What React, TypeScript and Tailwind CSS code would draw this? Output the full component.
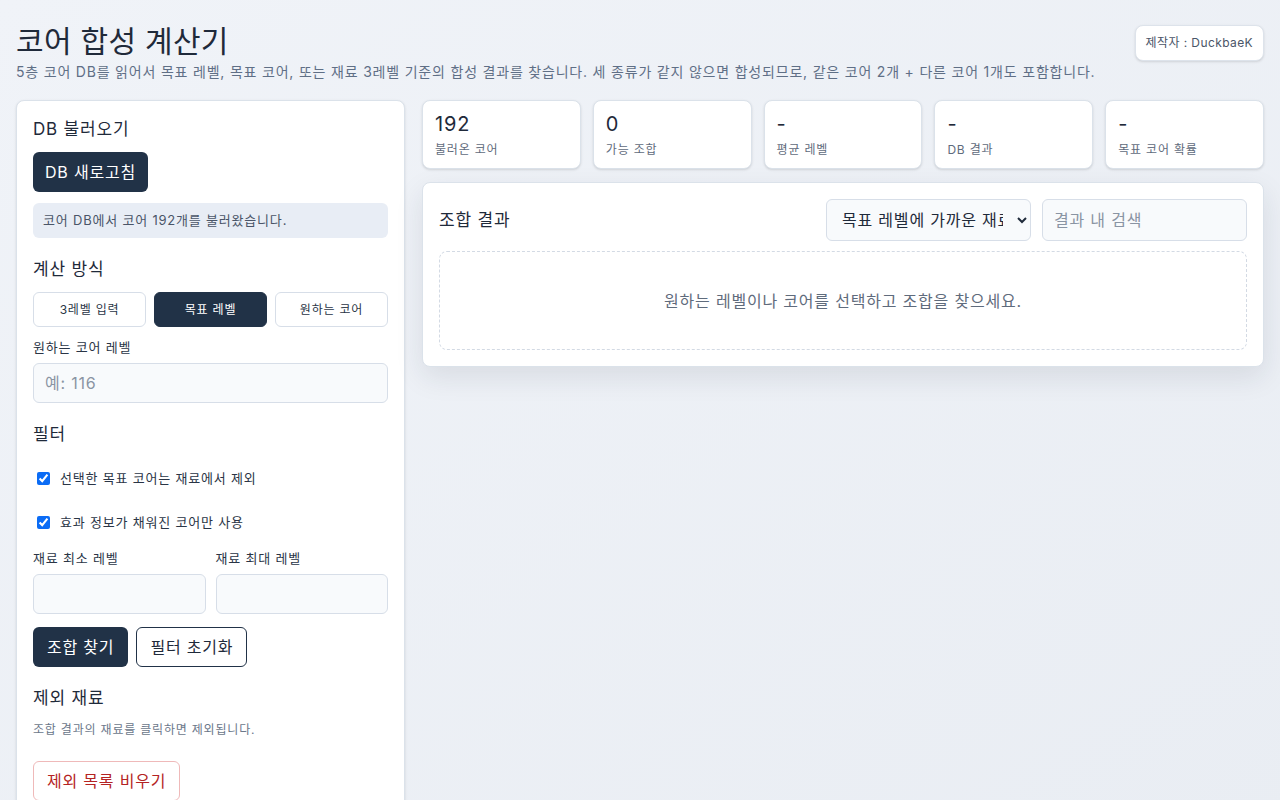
import { useState } from "react"

const stats = [
  { value: "192", label: "불러온 코어" },
  { value: "0", label: "가능 조합" },
  { value: "-", label: "평균 레벨" },
  { value: "-", label: "DB 결과" },
  { value: "-", label: "목표 코어 확률" },
]

const modes = ["3레벨 입력", "목표 레벨", "원하는 코어"]

export default function App() {
  const [mode, setMode] = useState("목표 레벨")
  const [excludeTarget, setExcludeTarget] = useState(true)
  const [onlyFilled, setOnlyFilled] = useState(true)

  return (
    <div
      className="min-h-screen bg-gradient-to-br from-[#f0f3f8] to-[#e9edf3] px-4 pt-[22px] pb-8 tracking-[0.8px] text-[#1f2a3a]"
      style={{ fontFamily: 'Inter, "Noto Sans CJK KR", sans-serif' }}
    >
      {/* header */}
      <header className="flex items-start justify-between">
        <div>
          <h1 className="text-[30px] font-normal leading-[38px] tracking-[0.3px]">코어 합성 계산기</h1>
          <p className="mt-[2px] text-[14px] leading-[19px] text-[#5f6f86]">
            5층 코어 DB를 읽어서 목표 레벨, 목표 코어, 또는 재료 3레벨 기준의 합성 결과를 찾습니다. 세 종류가 같지 않으면
            합성되므로, 같은 코어 2개 + 다른 코어 1개도 포함합니다.
          </p>
        </div>
        <div className="mt-[3px] rounded-lg border border-[#dde3eb] bg-white px-[10px] py-[9px] text-[12px] leading-[16px] tracking-[0.4px] text-[#4a5568] shadow-sm">
          제작자 : DuckbaeK
        </div>
      </header>

      <div className="mt-[19px] grid grid-cols-[389px_1fr] items-start gap-[17px]">
        {/* left panel */}
        <aside className="rounded-lg border border-[#dbe2ea] bg-white px-4 pt-[16px] pb-6 shadow-sm">
          <h2 className="text-[17px] leading-6">DB 불러오기</h2>
          <button className="mt-[11px] h-10 rounded-md bg-[#213247] px-[12px] text-[16px] text-white">DB 새로고침</button>
          <div className="mt-[11px] rounded-md bg-[#e8edf5] px-[10px] py-[8px] text-[13px] leading-[19px] text-[#4a5568]">
            코어 DB에서 코어 192개를 불러왔습니다.
          </div>

          <h2 className="mt-[19px] text-[17px] leading-6">계산 방식</h2>
          <div className="mt-[11px] grid grid-cols-3 gap-2">
            {modes.map((m) => (
              <button
                key={m}
                onClick={() => setMode(m)}
                className={
                  m === mode
                    ? "h-[35px] rounded-md border border-[#213247] bg-[#213247] text-[12px] text-white"
                    : "h-[35px] rounded-md border border-[#d7dee8] bg-white text-[12px] text-[#2a3546]"
                }
              >
                {m}
              </button>
            ))}
          </div>

          <label className="mt-[11px] block text-[13px] leading-[18px] text-[#2a3546]">원하는 코어 레벨</label>
          <input
            placeholder="예: 116"
            className="mt-[7px] h-10 w-full rounded-md border border-[#d7dee8] bg-[#f8fafc] px-[11px] text-[16px] outline-none placeholder:text-[#8a94a3]"
          />

          <h2 className="mt-[19px] text-[17px] leading-6">필터</h2>
          <label className="mt-[23px] flex items-center gap-[10px] pl-[4px] text-[13px] leading-[18px] text-[#2a3546]">
            <input
              type="checkbox"
              checked={excludeTarget}
              onChange={(e) => setExcludeTarget(e.target.checked)}
              className="h-[13px] w-[13px] accent-[#0b6cf5]"
            />
            선택한 목표 코어는 재료에서 제외
          </label>
          <label className="mt-[26px] flex items-center gap-[10px] pl-[4px] text-[13px] leading-[18px] text-[#2a3546]">
            <input
              type="checkbox"
              checked={onlyFilled}
              onChange={(e) => setOnlyFilled(e.target.checked)}
              className="h-[13px] w-[13px] accent-[#0b6cf5]"
            />
            효과 정보가 채워진 코어만 사용
          </label>

          <div className="mt-[18px] grid grid-cols-2 gap-[10px]">
            <div>
              <label className="block text-[13px] leading-[18px] text-[#2a3546]">재료 최소 레벨</label>
              <input className="mt-[7px] h-10 w-full rounded-md border border-[#d7dee8] bg-[#f8fafc] px-[11px] text-[16px] outline-none" />
            </div>
            <div>
              <label className="block text-[13px] leading-[18px] text-[#2a3546]">재료 최대 레벨</label>
              <input className="mt-[7px] h-10 w-full rounded-md border border-[#d7dee8] bg-[#f8fafc] px-[11px] text-[16px] outline-none" />
            </div>
          </div>

          <div className="mt-[13px] flex gap-2">
            <button className="h-10 rounded-md bg-[#213247] px-[14px] text-[16px] text-white">조합 찾기</button>
            <button className="h-10 rounded-md border border-[#213247] bg-white px-[13px] text-[16px] text-[#1f2a3a]">
              필터 초기화
            </button>
          </div>

          <h2 className="mt-[19px] text-[17px] leading-6">제외 재료</h2>
          <p className="mt-[12px] text-[12px] leading-[16px] text-[#6b778a]">조합 결과의 재료를 클릭하면 제외됩니다.</p>
          <button className="mt-[23px] h-10 rounded-md border border-[#efb9b9] bg-white px-[13px] text-[16px] text-[#b42323]">
            제외 목록 비우기
          </button>
        </aside>

        {/* right column */}
        <main className="flex flex-col gap-[13px]">
          <div className="grid grid-cols-5 gap-[12px]">
            {stats.map((s) => (
              <div key={s.label} className="h-[69px] rounded-lg border border-[#dbe2ea] bg-white px-3 pt-[10px] shadow-sm">
                <div className="text-[20px] leading-[26px] text-[#1f2a3a]">{s.value}</div>
                <div className="mt-[5px] text-[12px] leading-[16px] text-[#5f6b7c]">{s.label}</div>
              </div>
            ))}
          </div>

          <section className="rounded-lg border border-[#dbe2ea] bg-white p-4 shadow-[0_10px_28px_rgba(30,41,59,0.10)]">
            <div className="flex items-center justify-between">
              <h2 className="text-[17px] leading-6">조합 결과</h2>
              <div className="flex gap-[11px]">
                <select className="h-[42px] w-[205px] rounded-md border border-[#d7dee8] bg-[#f8fafc] px-[11px] text-[16px] text-[#1f2a3a] outline-none">
                  <option>목표 레벨에 가까운 재료 순</option>
                  <option>레벨 높은 순</option>
                </select>
                <input
                  placeholder="결과 내 검색"
                  className="h-[42px] w-[205px] rounded-md border border-[#d7dee8] bg-[#f8fafc] px-[11px] text-[16px] outline-none placeholder:text-[#8a94a3]"
                />
              </div>
            </div>
            <div className="mt-[10px] flex h-[99px] items-center justify-center rounded-lg border border-dashed border-[#d3dae4] text-[16px] text-[#5f6b7c]">
              원하는 레벨이나 코어를 선택하고 조합을 찾으세요.
            </div>
          </section>
        </main>
      </div>
    </div>
  )
}
